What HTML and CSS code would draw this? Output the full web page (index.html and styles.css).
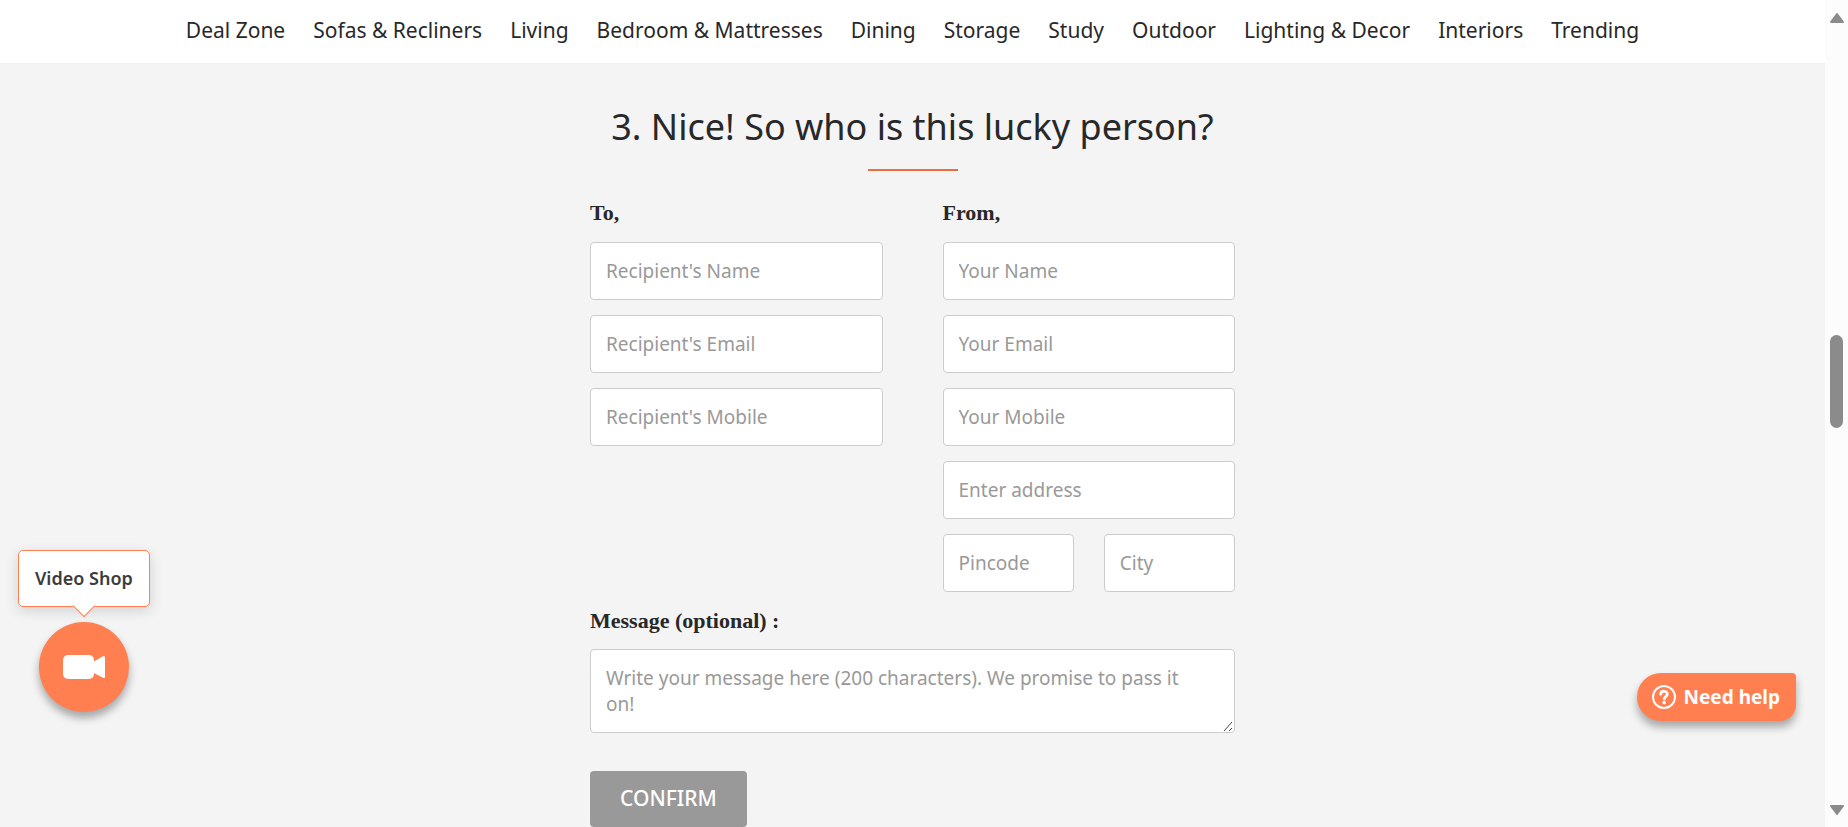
FILE: index.html
```html
<!DOCTYPE html>
<html lang="en">
<head>
<meta charset="utf-8">
<title>Gift Card</title>
<link rel="stylesheet" href="styles.css">
</head>
<body>
<div class="viewport">
  <div class="page">
    <nav class="nav" aria-label="Categories">
      <a href="#">Deal Zone</a>
      <a href="#">Sofas &amp; Recliners</a>
      <a href="#">Living</a>
      <a href="#">Bedroom &amp; Mattresses</a>
      <a href="#">Dining</a>
      <a href="#">Storage</a>
      <a href="#">Study</a>
      <a href="#">Outdoor</a>
      <a href="#">Lighting &amp; Decor</a>
      <a href="#">Interiors</a>
      <a href="#">Trending</a>
    </nav>
    <main class="main">
      <h1 class="title">3. Nice! So who is this lucky person?</h1>
      <form class="form">
        <div class="columns">
          <fieldset class="group">
            <legend class="heading">To,</legend>
            <input class="field" type="text" placeholder="Recipient's Name" aria-label="Recipient's Name">
            <input class="field" type="email" placeholder="Recipient's Email" aria-label="Recipient's Email">
            <input class="field" type="tel" placeholder="Recipient's Mobile" aria-label="Recipient's Mobile">
          </fieldset>
          <fieldset class="group">
            <legend class="heading">From,</legend>
            <input class="field" type="text" placeholder="Your Name" aria-label="Your Name">
            <input class="field" type="email" placeholder="Your Email" aria-label="Your Email">
            <input class="field" type="tel" placeholder="Your Mobile" aria-label="Your Mobile">
            <input class="field" type="text" placeholder="Enter address" aria-label="Enter address">
            <div class="pair">
              <input class="field" type="text" placeholder="Pincode" aria-label="Pincode">
              <input class="field" type="text" placeholder="City" aria-label="City">
            </div>
          </fieldset>
        </div>
        <label class="heading message-label" for="message">Message (optional) :</label>
        <div class="message-box">
          <textarea class="field message" id="message" rows="2" placeholder="Write your message here (200 characters). We promise to pass it on!"></textarea>
          <svg class="grip" viewBox="0 0 12 12" aria-hidden="true"><path d="M2 11 10 2M7 11 10 8"/></svg>
        </div>
        <button class="confirm" type="button">CONFIRM</button>
      </form>
    </main>
  </div>
  <div class="scrollbar" aria-hidden="true">
    <svg class="arrow" viewBox="0 0 14 10"><path d="M7 1 13 9H1Z"/></svg>
    <div class="track"><div class="thumb"></div></div>
    <svg class="arrow" viewBox="0 0 14 10"><path d="M7 9 1 1H13Z"/></svg>
  </div>
</div>

<div class="video">
  <div class="bubble">Video Shop</div>
  <button class="video-button" type="button" aria-label="Video Shop">
    <svg viewBox="0 0 42 24" width="42" height="24"><rect width="31" height="24" rx="5"/><path d="M30 7 40 1.200Q42 .2 42 2.500V21.500Q42 23.800 40 22.800L30 17.500Z"/></svg>
  </button>
</div>

<button class="help" type="button">
  <svg viewBox="0 0 24 24" width="24" height="24"><circle cx="12" cy="12" r="11" stroke-width="2"/><path d="M8.600 9.200C8.800 5.200 15.400 5.400 15.300 9.200 15.200 11.600 12.200 11.500 12.200 14" stroke-width="2.800"/><circle class="dot" cx="12.200" cy="17.600" r="1.800"/></svg>
  Need help
</button>
</body>
</html>
```
FILE: styles.css
```css
* {
  box-sizing: border-box;
}

body {
  margin: 0;
  height: 100vh;
  overflow: hidden;
  background: #f4f4f4;
  color: #282828;
  font-family: "Noto Sans", "Open Sans", sans-serif;
}

.viewport {
  display: grid;
  grid-template-columns: 1fr 23px;
  height: 100vh;
}

.page {
  min-width: 0;
  overflow: hidden;
}

.nav {
  display: flex;
  justify-content: center;
  gap: 28px;
  height: 64px;
  padding-top: 15px;
  background: #fff;
  border-bottom: 1px solid #f0f0f0;
  font-size: 21px;
  line-height: 30px;
  white-space: nowrap;
}

.nav a {
  color: inherit;
  text-decoration: none;
}

.main {
  padding-top: 38px;
}

.title {
  display: flex;
  flex-direction: column;
  align-items: center;
  gap: 17px;
  margin: 0;
  font-size: 36px;
  font-weight: 400;
  line-height: 50px;
}

.title::after {
  content: "";
  width: 90px;
  height: 2px;
  background: #ea6f3c;
}

.form {
  max-width: 645px;
  margin: 0 auto;
  padding-top: 27px;
}

.columns {
  display: grid;
  grid-template-columns: 1fr 1fr;
  gap: 60px;
}

.group {
  display: flex;
  flex-direction: column;
  gap: 15px;
  min-width: 0;
  margin: 0;
  padding: 0;
  border: 0;
}

.heading {
  padding: 0;
  font-family: "Liberation Serif", serif;
  font-size: 22px;
  font-weight: 700;
  line-height: 30px;
}

.group .heading {
  margin-bottom: 14px;
}

.field {
  display: block;
  width: 100%;
  height: 58px;
  padding: 0 15px 1px;
  border: 1px solid #ccc;
  border-radius: 4px;
  background: #fff;
  color: #282828;
  font: 19px/26px "Noto Sans", "Open Sans", sans-serif;
}

.field::placeholder {
  color: #999;
  opacity: 1;
}

.pair {
  display: grid;
  grid-template-columns: 1fr 1fr;
  gap: 30px;
}

.message-label {
  display: block;
  margin: 14px 0 13px;
}

.message-box {
  position: relative;
}

.message {
  height: 84px;
  padding: 15px 30px 15px 15px;
  overflow: hidden;
  resize: none;
}

.grip {
  position: absolute;
  right: 1px;
  bottom: 1px;
  width: 12px;
  height: 12px;
  fill: none;
  stroke: #444;
  stroke-width: 1px;
}

.confirm {
  display: block;
  margin-top: 38px;
  padding: 13px 30px 15px;
  border: 0;
  border-radius: 4px;
  background: #999;
  color: #fff;
  font: 500 21px/28px "Noto Sans", "Open Sans", sans-serif;
}

.scrollbar {
  display: flex;
  flex-direction: column;
  align-items: center;
  padding: 13px 0 12px;
  background: #fcfcfc;
}

.arrow {
  width: 14px;
  height: 10px;
  fill: #8b8b8b;
  stroke: #8b8b8b;
  stroke-width: 2px;
  stroke-linejoin: round;
}

.track {
  flex: 1;
  padding-top: 312px;
}

.thumb {
  width: 13px;
  height: 93px;
  border-radius: 7px;
  background: #8b8b8b;
}

.video {
  position: absolute;
  left: 18px;
  bottom: 115px;
  display: flex;
  flex-direction: column;
  align-items: center;
  gap: 15px;
}

.bubble {
  position: relative;
  padding: 13px 16px;
  border: 1px solid #ff7f50;
  border-radius: 5px;
  background: #fff;
  box-shadow: 0 4px 14px rgba(0, 0, 0, 0.14);
  color: #3c3c3c;
  font-size: 18px;
  font-weight: 600;
  line-height: 29px;
  white-space: nowrap;
}

.bubble::after {
  content: "";
  position: absolute;
  left: calc(50% - 8px);
  bottom: -8px;
  width: 15px;
  height: 15px;
  border: solid #ff7f50;
  border-width: 0 1px 1px 0;
  background: #fff;
  transform: rotate(45deg);
}

.video-button {
  display: grid;
  place-items: center;
  width: 90px;
  height: 90px;
  padding: 0;
  border: 0;
  border-radius: 50%;
  background: #ff7f50;
  box-shadow: 0 6px 8px rgba(0, 0, 0, 0.32);
  fill: #fff;
}

.help {
  position: absolute;
  right: 52px;
  bottom: 106px;
  display: flex;
  align-items: center;
  gap: 8px;
  height: 48px;
  padding: 0 16px 0 15px;
  border: 0;
  border-radius: 24px 4px 16px 24px;
  background: #ff7f50;
  box-shadow: 0 6px 8px rgba(0, 0, 0, 0.32);
  color: #fff;
  font: 700 19px/28px "Noto Sans", "Open Sans", sans-serif;
  white-space: nowrap;
}

.help svg {
  fill: none;
  stroke: #fff;
  stroke-linecap: round;
}

.help .dot {
  fill: #fff;
  stroke: none;
}
```
